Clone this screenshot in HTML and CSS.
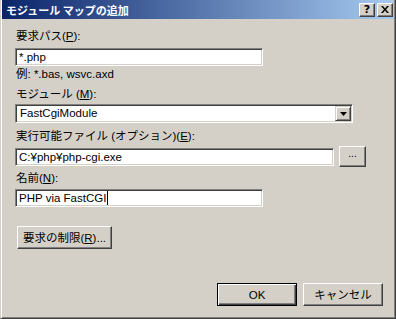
FILE: index.html
```html
<!DOCTYPE html>
<html lang="ja">
<head>
<meta charset="utf-8">
<link rel="stylesheet" href="styles.css">
</head>
<body>
<div class="window">
  <div class="titlebar">
    <span class="title">モジュール マップの追加</span>
    <div class="tbtns">
      <span class="tbtn">?</span>
      <span class="tbtn close">
        <svg width="8" height="7" viewBox="0 0 8 7"><path d="M0 0h2l2 2.5L6 0h2L5 3.5 8 7H6L4 4.5 2 7H0l3-3.5z" fill="#000"/></svg>
      </span>
    </div>
  </div>
  <div class="content">
    <div class="label l1">要求パス(<u>P</u>):</div>
    <div class="field short f1">*.php</div>
    <div class="hint">例: *.bas, wsvc.axd</div>
    <div class="label l2">モジュール (<u>M</u>):</div>
    <div class="select">
      <span class="seltext">FastCgiModule</span>
      <span class="selbtn"><svg width="7" height="4" viewBox="0 0 7 4"><path d="M0 0h7L3.5 4z" fill="#000"/></svg></span>
    </div>
    <div class="label l3">実行可能ファイル (オプション)(<u>E</u>):</div>
    <div class="row">
      <div class="field long">C:¥php¥php-cgi.exe</div>
      <span class="btn browse">...</span>
    </div>
    <div class="label l4">名前(<u>N</u>):</div>
    <div class="field short f4">PHP via FastCGI<span class="caret"></span></div>
    <span class="btn limit">要求の制限(<u>R</u>)...</span>
    <div class="footer">
      <span class="btn default">OK</span>
      <span class="btn">キャンセル</span>
    </div>
  </div>
</div>
</body>
</html>
```

FILE: styles.css
```css
html, body {
  margin: 0;
  padding: 0;
  background: #d4d0c8;
}
body {
  font-family: "Liberation Sans", "Noto Sans CJK JP", sans-serif;
  font-size: 11.5px;
  color: #000;
}
.window {
  width: 396px;
  height: 319px;
  box-sizing: border-box;
  background: #d4d0c8;
  border-left: 1px solid #d4d0c8;
  border-right: 1px solid #404040;
  border-bottom: 1px solid #404040;
  box-shadow: inset 1px 0 0 #fff, inset -1px -1px 0 #808080;
  padding: 0 1px 0 1px;
  display: flex;
  flex-direction: column;
}
.titlebar {
  height: 19px;
  background: linear-gradient(to right, #0a246a, #a6caf0);
  display: flex;
  align-items: center;
  justify-content: space-between;
  padding: 0 1px 0 4px;
}
.title {
  color: #fff;
  font-family: "Noto Sans CJK JP", sans-serif;
  font-weight: bold;
  font-size: 11px;
  line-height: 14px;
}
.tbtns {
  display: flex;
  gap: 2px;
}
.tbtn {
  width: 16px;
  height: 14px;
  box-sizing: border-box;
  background: #d4d0c8;
  border-top: 1px solid #fff;
  border-left: 1px solid #fff;
  border-right: 1px solid #404040;
  border-bottom: 1px solid #404040;
  box-shadow: inset -1px -1px 0 #808080;
  display: flex;
  align-items: center;
  justify-content: center;
  font-family: "DejaVu Sans", sans-serif;
  font-weight: bold;
  font-size: 11px;
  line-height: 12px;
}
.content {
  padding: 10px 0 0 13px;
  display: flex;
  flex-direction: column;
  align-items: flex-start;
}
.label, .hint {
  line-height: 14px;
  height: 14px;
  padding-left: 1px;
  white-space: nowrap;
}
u { text-decoration: underline; text-underline-offset: 1px; }
.field {
  box-sizing: border-box;
  height: 18px;
  background: #fff;
  border-top: 1px solid #808080;
  border-left: 1px solid #808080;
  border-right: 1px solid #fff;
  border-bottom: 1px solid #fff;
  box-shadow: inset 1px 1px 0 #404040, inset -1px -1px 0 #d4d0c8;
  padding: 0 3px;
  line-height: 16px;
  white-space: nowrap;
  display: flex;
  align-items: center;
}
.short { width: 248px; }
.long { width: 319px; }
.f1 { margin-top: 5px; }
.hint { margin-top: 1px; }
.l2 { margin-top: 6px; }
.select {
  margin-top: 3px;
  width: 338px;
  height: 19px;
  box-sizing: border-box;
  background: #fff;
  border-top: 1px solid #808080;
  border-left: 1px solid #808080;
  border-right: 1px solid #fff;
  border-bottom: 1px solid #fff;
  box-shadow: inset 1px 1px 0 #404040, inset -1px -1px 0 #d4d0c8;
  display: flex;
  align-items: center;
  justify-content: space-between;
  padding: 1px 1px 1px 4px;
}
.seltext { line-height: 15px; }
.selbtn {
  width: 16px;
  height: 15px;
  box-sizing: border-box;
  background: #d4d0c8;
  border-top: 1px solid #d4d0c8;
  border-left: 1px solid #d4d0c8;
  border-right: 1px solid #404040;
  border-bottom: 1px solid #404040;
  box-shadow: inset 1px 1px 0 #fff, inset -1px -1px 0 #808080;
  display: flex;
  align-items: center;
  justify-content: center;
}
.l3 { margin-top: 6px; }
.row {
  margin-top: 3px;
  display: flex;
  align-items: center;
  gap: 5px;
  height: 21px;
}
.l4 { margin-top: 4px; }
.f4 { margin-top: 4px; }
.caret {
  display: inline-block;
  width: 1px;
  height: 14px;
  background: #000;
  margin-left: 1px;
}
.btn {
  box-sizing: border-box;
  height: 23px;
  background: #d4d0c8;
  border-top: 1px solid #fff;
  border-left: 1px solid #fff;
  border-right: 1px solid #404040;
  border-bottom: 1px solid #404040;
  box-shadow: inset -1px -1px 0 #808080;
  display: inline-flex;
  align-items: center;
  justify-content: center;
  white-space: nowrap;
  line-height: 14px;
}
.browse {
  width: 27px;
  height: 21px;
  font-size: 10px;
  align-items: flex-end;
  padding-bottom: 5px;
}
.limit {
  margin-top: 19px;
  margin-left: 2px;
  width: 95px;
}
.footer {
  margin-top: 34px;
  align-self: flex-end;
  margin-right: 11px;
  display: flex;
  gap: 6px;
}
.footer .btn { width: 80px; }
.default {
  border: 1px solid #000;
  box-shadow: inset 1px 1px 0 #fff, inset -1px -1px 0 #404040, inset -2px -2px 0 #808080;
}
```
